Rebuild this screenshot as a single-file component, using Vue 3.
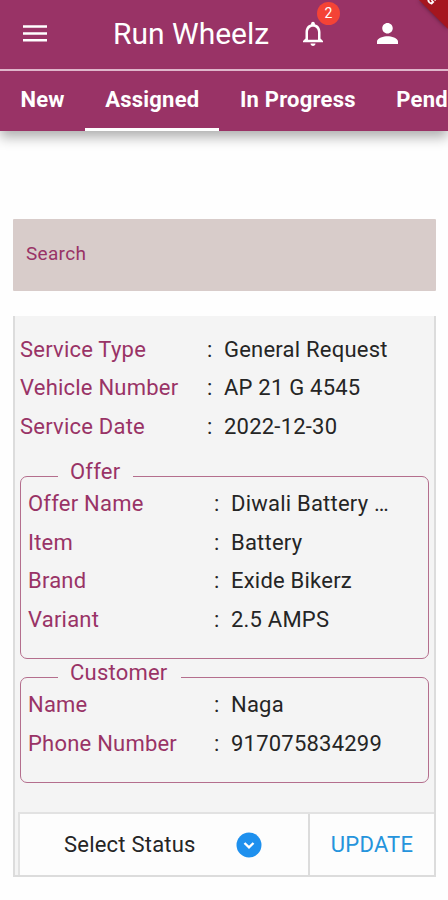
<template>
  <div class="screen">
    <header class="app-bar">
      <svg class="menu" viewBox="0 0 24 17" aria-label="Menu">
        <path d="M0 1.5h24M0 8.5h24M0 15.2h24" stroke="#fff" stroke-width="2.4" />
      </svg>
      <h1 class="title">Run Wheelz</h1>
      <div class="bell">
        <svg viewBox="4 2 16 20" fill="#fff">
          <path d="M12 22c1.1 0 2-.9 2-2h-4c0 1.1.9 2 2 2zm6-6v-5c0-3.07-1.63-5.64-4.5-6.32V4c0-.83-.67-1.5-1.5-1.5s-1.5.67-1.5 1.5v.68C7.64 5.36 6 7.92 6 11v5l-2 2v1h16v-1l-2-2zm-2 1H8v-6c0-2.48 1.51-4.5 4-4.5s4 2.02 4 4.5v6z" />
        </svg>
        <span class="badge">2</span>
      </div>
      <svg class="person" viewBox="4 4 16 16" fill="#fff">
        <path d="M12 12c2.21 0 4-1.79 4-4s-1.79-4-4-4-4 1.79-4 4 1.79 4 4 4zm0 2c-2.67 0-8 1.34-8 4v2h16v-2c0-2.66-5.33-4-8-4z" />
      </svg>
      <svg class="ribbon" viewBox="0 0 36 36">
        <path d="M7 0L36 29V0z" fill="#a5161f" />
        <text transform="translate(19.5 5.5) rotate(45)" text-anchor="end">DEBUG</text>
      </svg>
    </header>

    <nav class="tabs">
      <button
        v-for="tab in tabs"
        :key="tab"
        type="button"
        class="tab"
        :class="{ active: activeTab === tab }"
        @click="activeTab = tab"
      >{{ tab }}</button>
    </nav>

    <main class="content">
      <input v-model="search" class="search" type="text" placeholder="Search" />

      <section class="card">
        <div class="service">
          <div v-for="row in service" :key="row.label" class="row">
            <span class="label">{{ row.label }}</span>
            <span class="colon">:</span>
            <span class="value">{{ row.value }}</span>
          </div>
        </div>

        <div v-for="group in groups" :key="group.title" class="group" :class="group.name">
          <span class="legend">{{ group.title }}</span>
          <div v-for="row in group.rows" :key="row.label" class="row">
            <span class="label">{{ row.label }}</span>
            <span class="colon">:</span>
            <span class="value">{{ row.value }}</span>
          </div>
        </div>

        <footer class="actions">
          <button type="button" class="status">
            <span>Select Status</span>
            <svg viewBox="0 0 26 26">
              <circle cx="13" cy="13" r="12.5" fill="#1e90ee" />
              <path d="M8.5 11l4.5 4.3 4.5-4.3" fill="none" stroke="#fff" stroke-width="2.4" />
            </svg>
          </button>
          <button type="button" class="update">UPDATE</button>
        </footer>
      </section>
    </main>
  </div>
</template>

<script setup>
import { ref } from 'vue'

const tabs = ['New', 'Assigned', 'In Progress', 'Pending']
const activeTab = ref('Assigned')
const search = ref('')

const service = [
  { label: 'Service Type', value: 'General Request' },
  { label: 'Vehicle Number', value: 'AP 21 G 4545' },
  { label: 'Service Date', value: '2022-12-30' }
]

const groups = [
  {
    name: 'offer',
    title: 'Offer',
    rows: [
      { label: 'Offer Name', value: 'Diwali Battery …' },
      { label: 'Item', value: 'Battery' },
      { label: 'Brand', value: 'Exide Bikerz' },
      { label: 'Variant', value: '2.5 AMPS' }
    ]
  },
  {
    name: 'customer',
    title: 'Customer',
    rows: [
      { label: 'Name', value: 'Naga' },
      { label: 'Phone Number', value: '917075834299' }
    ]
  }
]
</script>

<style>
body {
  background: #fefefe;
  overflow: hidden;
}
</style>

<style scoped>
.screen {
  width: 448px;
  height: 900px;
  overflow: hidden;
  font-family: Roboto, "Liberation Sans", sans-serif;
  color: #252525;
}

button,
input {
  font-family: inherit;
  border: none;
  border-radius: 0;
  margin: 0;
}

.app-bar {
  position: relative;
  display: flex;
  align-items: center;
  box-sizing: border-box;
  height: 71px;
  padding: 0 50px 2px 23px;
  background: #993366;
  border-bottom: 2px solid #dfb6cb;
}

.menu {
  width: 24px;
  height: 17px;
}

.title {
  width: 156px;
  margin: 0 34px 0 66px;
  font-size: 30px;
  font-weight: 400;
  line-height: 40px;
  white-space: nowrap;
  color: #fff;
}

.bell {
  position: relative;
  width: 20px;
  height: 25px;
}

.bell svg {
  display: block;
  width: 20px;
  height: 25px;
}

.badge {
  position: absolute;
  left: 14px;
  top: -19px;
  width: 23px;
  height: 23px;
  border-radius: 50%;
  background: #f44336;
  color: #fff;
  font-size: 14px;
  line-height: 23px;
  text-align: center;
}

.person {
  width: 21px;
  height: 21px;
  margin-left: auto;
}

.ribbon {
  position: absolute;
  top: 0;
  right: 0;
  width: 36px;
  height: 36px;
  filter: drop-shadow(0 0 2px rgba(0, 0, 0, 0.5));
}

.ribbon text {
  font-size: 12px;
  font-weight: 900;
  fill: #fff;
}

.tabs {
  display: flex;
  height: 60px;
  background: #993366;
  box-shadow: 0 6px 12px rgba(0, 0, 0, 0.32);
}

.tab {
  flex: none;
  box-sizing: border-box;
  height: 60px;
  padding: 1px 20px 0 20.5px;
  border-bottom: 3px solid transparent;
  background: none;
  color: #fff;
  font-size: 22px;
  font-weight: 700;
  letter-spacing: 0.22px;
  line-height: 30px;
}

.tab.active {
  border-bottom-color: #fff;
}

.content {
  padding: 87.5px 12px 0 13px;
}

.search {
  display: block;
  box-sizing: border-box;
  width: 100%;
  height: 72px;
  padding: 0 13px 3px;
  border-radius: 1px;
  background: #d8ccca;
  color: #993366;
  font-size: 19px;
  letter-spacing: 0.3px;
}

.search::placeholder {
  color: #993366;
  opacity: 1;
}

.card {
  box-sizing: border-box;
  height: 561px;
  margin-top: 25.5px;
  padding: 14px 0 0;
  background: #f4f4f4;
  border: 2px solid #dcdcdc;
  border-top: none;
  display: flex;
  flex-direction: column;
}

.service {
  padding-left: 5px;
}

.row {
  display: flex;
  align-items: center;
  height: 38.6px;
  font-size: 22px;
  letter-spacing: 0.22px;
  white-space: nowrap;
}

.label {
  width: 187px;
  color: #993366;
}

.colon {
  width: 17px;
}

.group .label {
  width: 186px;
}

.group {
  position: relative;
  box-sizing: border-box;
  margin: 0 5px;
  padding: 7.5px 0 0 7px;
  border: 1.5px solid #b46e8d;
  border-radius: 7px;
}

.offer {
  height: 183px;
  margin-top: 30px;
}

.customer {
  height: 106px;
  margin-top: 18px;
}

.legend {
  position: absolute;
  left: 37px;
  top: -18px;
  padding: 0 13px 0 12px;
  background: #f4f4f4;
  color: #993366;
  font-size: 22px;
  letter-spacing: 0.22px;
  line-height: 25px;
}

.actions {
  display: flex;
  box-sizing: border-box;
  height: 63px;
  margin-top: auto;
  margin-left: 3px;
  border-top: 2px solid #e2e2e2;
  border-left: 2px solid #e2e2e2;
  background: #fdfdfd;
}

.actions button {
  display: flex;
  align-items: center;
  background: none;
  font-size: 22px;
  letter-spacing: 0.22px;
}

.status {
  width: 290px;
  box-sizing: border-box;
  justify-content: space-between;
  padding: 0 46px 0 44px;
  border-right: 2px solid #dcdcdc;
  color: #252525;
}

.status svg {
  width: 26px;
  height: 26px;
}

.update {
  flex: 1;
  justify-content: center;
  padding: 0;
  color: #2594dc;
}
</style>
